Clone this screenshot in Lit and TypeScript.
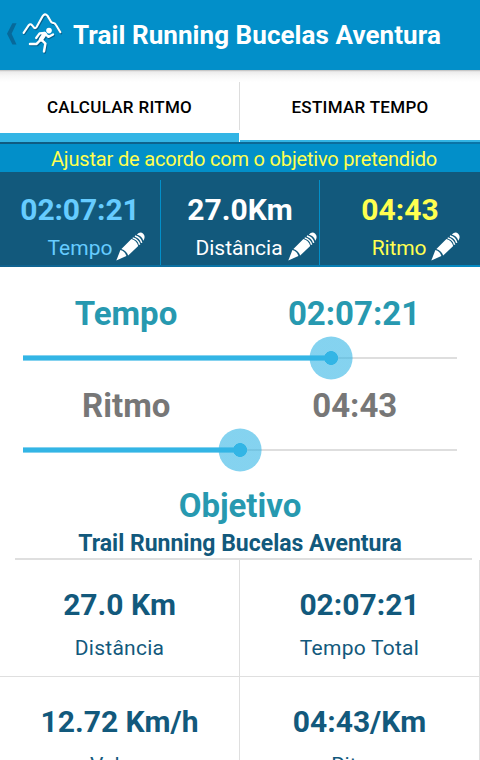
import { LitElement, html, css, svg } from "lit";
import { customElement } from "lit/decorators.js";

const pencil = html`<svg class="pencil" width="29" height="29" viewBox="0 0 29 29">
  <g fill="#fff">
    <path d="M0.3 28.5 L4.4 18.1 Q8.8 19.3 10.4 24 Z" />
    <path d="M5.4 16.9 L15.4 7.1 Q20.8 8.6 22.2 14 L12.2 23.5 Q10.4 18.4 5.4 16.9 Z" />
    <path d="M20.8 2.4 Q24.4 -0.9 27.2 1.7 Q30 4.6 27.3 8.7 Q26 3.8 20.8 2.4 Z" />
  </g>
  <g fill="none" stroke="#fff" stroke-width="1.5">
    <path d="M16.7 5.9 Q22.2 7.4 23.6 12.8" />
    <path d="M18.9 4 Q24.3 5.4 25.7 10.9" />
  </g>
</svg>`;

const figure = svg`
  <path d="M1.6 20.8 L6.8 13.2 Q8.4 11.4 10 13.2 L12 15.6 Q13.4 16.8 14.6 15 L20.6 4.2 Q22.8 0.8 25.4 3.6 L29.2 10 Q30.2 11 31.6 11 Q33 11.2 34 13 L38.4 20.2" stroke-width="2.1" />
  <path d="M14.2 26 L17.6 21.4 L22.6 21 L26.4 24.9 L31 22.4" stroke-width="2.3" />
  <path d="M22.6 22 L19 27.4" stroke-width="4.4" />
  <path d="M18.4 28 L14.6 31.9 L8 31.9" stroke-width="2.5" />
  <path d="M19.6 27.8 L23.4 31.6 L22 39.4" stroke-width="2.5" />`;

@customElement("race-header")
class RaceHeader extends LitElement {
  static styles = css`
    :host { display: block; }
    .bar {
      box-sizing: border-box; height: 70px; display: flex; align-items: center;
      background: #028fc9; color: #fff; padding-left: 7px;
    }
    .back { flex: none; margin-top: -2px; }
    .logo { flex: none; margin: 0 9px 0 5px; }
    .title { font: 700 26px/70px Roboto, sans-serif; letter-spacing: 0.07px; white-space: nowrap; }
  `;
  render() {
    return html`<div class="bar">
      <svg class="back" width="10" height="22" viewBox="0 0 10 22">
        <path d="M5.4 0.3 H9.5 L4.6 10.8 L9.5 21.4 H5.4 L0 10.8 Z" fill="#07699a" />
      </svg>
      <svg class="logo" width="42" height="46" viewBox="0 0 42 46">
        <g fill="none" stroke="#07527a" stroke-linecap="round" stroke-linejoin="round" opacity=".75" transform="translate(0.8 1.2)">${figure}</g>
        <g fill="none" stroke="#fff" stroke-linecap="round" stroke-linejoin="round">${figure}</g>
        <circle cx="27" cy="18.6" r="2.8" fill="#fff" />
      </svg>
      <span class="title">Trail Running Bucelas Aventura</span>
    </div>`;
  }
}

@customElement("seek-row")
class SeekRow extends LitElement {
  static properties = { label: {}, value: {}, percent: { type: Number }, muted: { type: Boolean } };
  declare label: string;
  declare value: string;
  declare percent: number;
  declare muted: boolean;
  static styles = css`
    :host { display: block; height: 92px; }
    .head {
      display: grid; grid-template-columns: 1fr 1fr; padding: 0 12px; text-align: center;
      font: 700 33px/40px Roboto, sans-serif; color: #2799b0;
    }
    .muted { color: #777; padding-right: 11px; }
    .track {
      height: 48px; margin: 0 23px; display: flex; align-items: center;
      background: linear-gradient(#dedede, #dedede) center / 100% 2px no-repeat;
    }
    .fill {
      height: 6px; flex: none; position: relative;
      background: linear-gradient(#85d2ef 1px, #33b5e5 1px, #33b5e5 5px, #85d2ef 5px);
    }
    .thumb {
      position: absolute; right: -21.5px; top: -18.5px; width: 43px; height: 43px; border-radius: 50%;
      background: radial-gradient(circle, #33b5e5 6.6px, rgba(51, 181, 229, 0.6) 7.2px);
      transform: translate(-0.4px, -0.5px);
    }
  `;
  render() {
    return html`<div class="head ${this.muted ? "muted" : ""}">
        <span>${this.label}</span><span>${this.value}</span>
      </div>
      <div class="track"><div class="fill" style="width:${this.percent}%"><div class="thumb"></div></div></div>`;
  }
}

@customElement("app-root")
class AppRoot extends LitElement {
  static styles = css`
    :host {
      display: block; height: 760px; overflow: hidden; background: #fff;
      font-family: Roboto, sans-serif;
    }
    .tabs {
      display: grid; grid-template-columns: 1fr 1fr; height: 72px; position: relative;
      background: linear-gradient(#b5b5b5 0, #d9d9d9 1px, #ececec 2px, #f7f7f7 6px, #fff 12px);
    }
    .tabs::after {
      content: ""; position: absolute; left: 239px; top: 12px; width: 1px; height: 48px; background: #ddd;
    }
    .tab {
      box-sizing: border-box; padding-top: 2px; text-align: center;
      font-weight: 500; font-size: 17px; line-height: 70px; letter-spacing: 0.3px; color: #000;
      box-shadow: inset 0 -2px #33b5e5;
    }
    .tab.on { box-shadow: inset 0 -9px #33b5e5; margin-right: 1px; }
    .banner {
      height: 30px; text-align: center; color: #ffff50; white-space: nowrap;
      font-size: 20px; line-height: 34px; letter-spacing: -0.18px; padding-left: 8px;
      background: linear-gradient(90deg, #0f5a80, #0a75a8) top / 100% 2px no-repeat, #028fc9;
    }
    .stats {
      box-sizing: border-box; height: 95px; padding-top: 8px;
      display: grid; grid-template-columns: 160px 160px 160px;
      background: linear-gradient(90deg, #10618d, #048ac3) bottom / 100% 2px no-repeat, #12597c;
    }
    .stat { height: 85px; text-align: center; }
    .stat.one { color: #66ccff; box-shadow: 1px 0 #028fc9; }
    .stat.two { color: #fff; box-shadow: inset -1px 0 #028fc9; }
    .stat.three { color: #ffff50; }
    .num { font-weight: 700; font-size: 30px; line-height: 40px; padding-top: 10px; }
    .one .num { letter-spacing: -0.1px; }
    .lab {
      display: flex; justify-content: center; height: 36px; padding-left: 32px;
      font-size: 21px; line-height: 36px;
    }
    .three .lab { letter-spacing: -0.2px; }
    .pencil { flex: none; margin: 2px 0 0 5px; }
    .one .pencil { margin-left: 4px; }
    .one .lab { padding-left: 33px; }
    .seeks { padding-top: 27px; }
    .goal { padding-top: 7px; text-align: center; }
    .heading { font-weight: 700; font-size: 33px; line-height: 42px; color: #2799b0; }
    .race {
      margin: 0 8px 0 15px; height: 31px; border-bottom: 2px solid #dfdfdf;
      font-weight: 700; font-size: 23px; line-height: 34px; color: #12597c;
    }
    .race span { display: block; margin-right: 7px; }
    .grid { display: grid; grid-template-columns: 1fr 1fr; color: #12597c; text-align: center; }
    .cell {
      box-sizing: border-box; height: 117px; padding-top: 25px;
      border-right: 1px solid #dfdfdf; border-bottom: 1px solid #dfdfdf;
    }
    .big { font-weight: 700; font-size: 30px; line-height: 40px; }
    .small { font-size: 21px; line-height: 30px; margin-top: 8px; letter-spacing: 0.25px; }
  `;

  private stats = [
    ["one", "02:07:21", "Tempo"],
    ["two", "27.0Km", "Distância"],
    ["three", "04:43", "Ritmo"],
  ];
  private cells = [
    ["27.0 Km", "Distância"],
    ["02:07:21", "Tempo Total"],
    ["12.72 Km/h", "Veloc."],
    ["04:43/Km", "Ritmo"],
  ];

  render() {
    return html`
      <race-header></race-header>
      <div class="tabs">
        <div class="tab on">CALCULAR RITMO</div>
        <div class="tab">ESTIMAR TEMPO</div>
      </div>
      <div class="banner">Ajustar de acordo com o objetivo pretendido</div>
      <div class="stats">
        ${this.stats.map(([cls, num, lab]) => html`<div class="stat ${cls}">
          <div class="num">${num}</div>
          <div class="lab"><span>${lab}</span>${pencil}</div>
        </div>`)}
      </div>
      <div class="seeks">
        <seek-row label="Tempo" value="02:07:21" percent="71"></seek-row>
        <seek-row label="Ritmo" value="04:43" percent="50" muted></seek-row>
      </div>
      <div class="goal">
        <div class="heading">Objetivo</div>
        <div class="race"><span>Trail Running Bucelas Aventura</span></div>
      </div>
      <div class="grid">
        ${this.cells.map(([big, small]) => html`<div class="cell">
          <div class="big">${big}</div>
          <div class="small">${small}</div>
        </div>`)}
      </div>`;
  }
}
